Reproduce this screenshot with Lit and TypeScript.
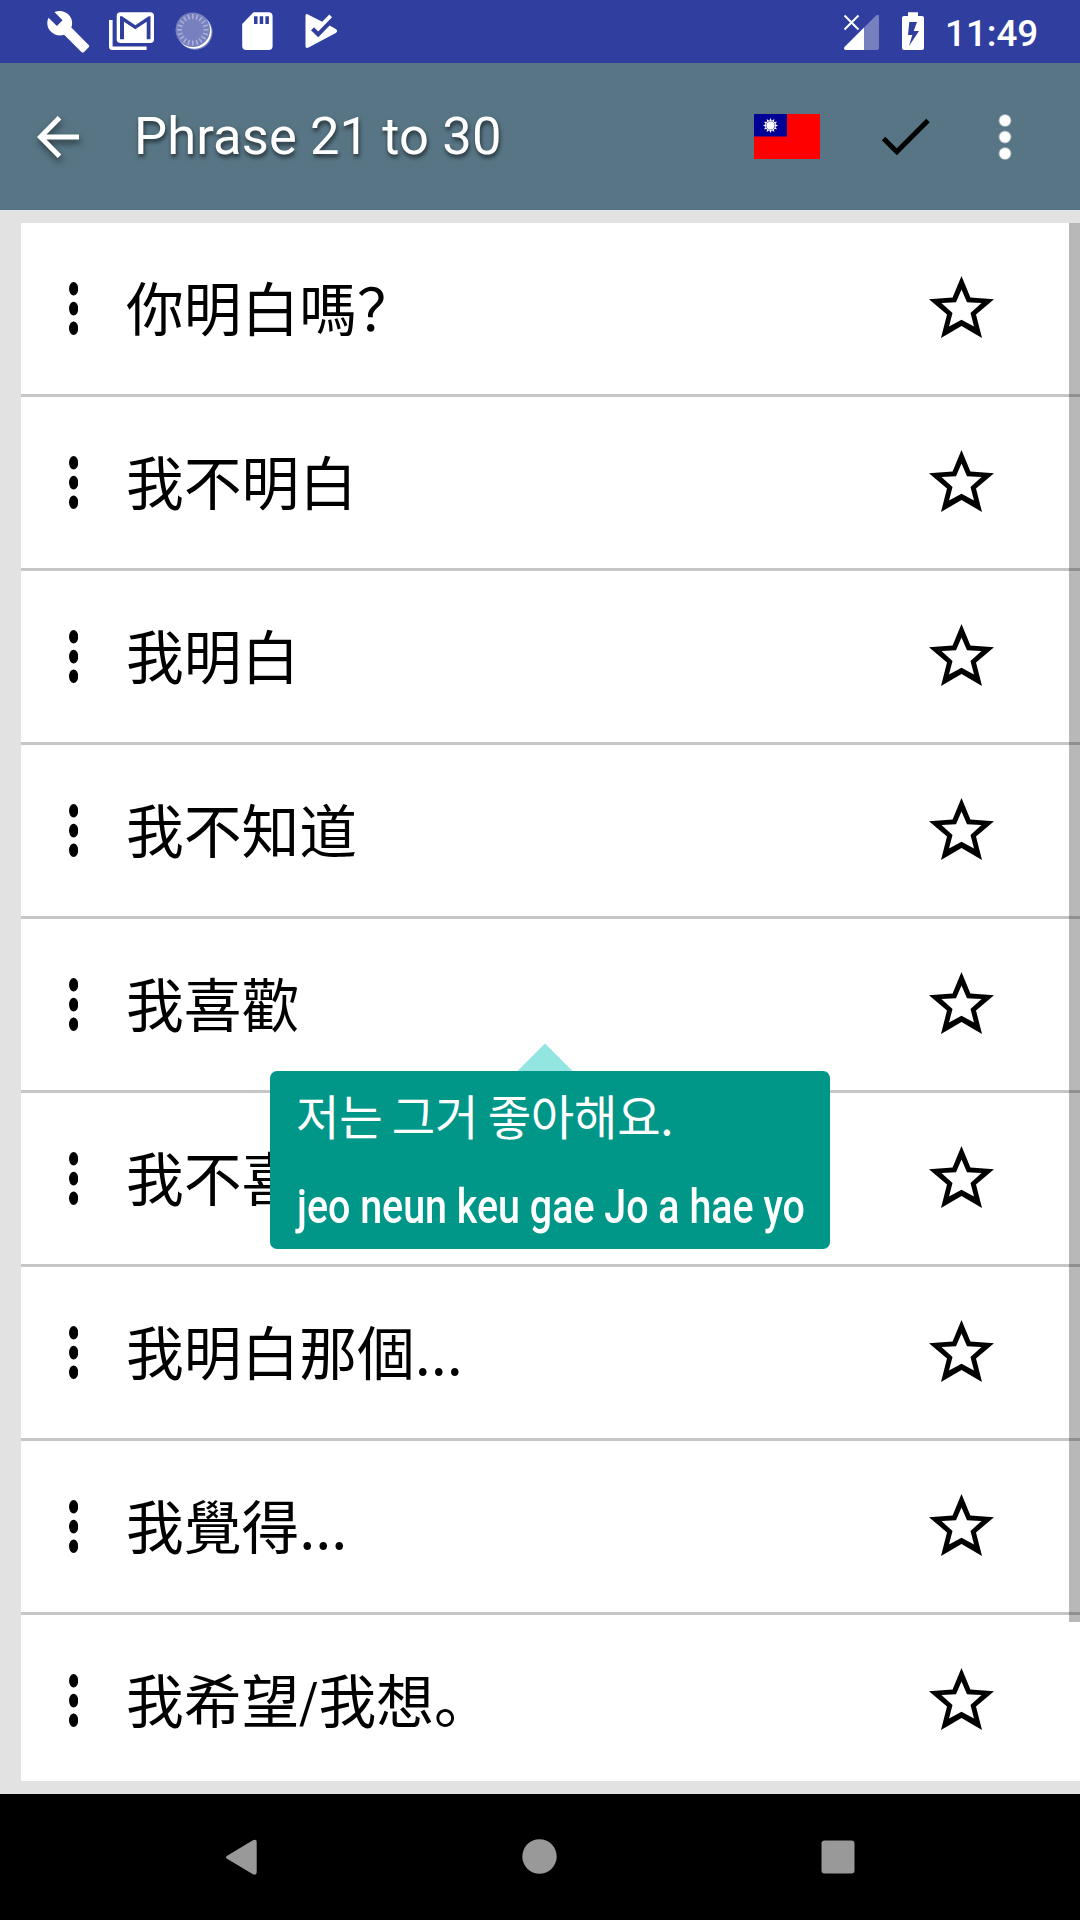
import { LitElement, html, css, svg } from "lit";
import { customElement, property } from "lit/decorators.js";

interface Phrase {
  text: string;
  rest?: string;
}

/* A phrase with a "rest" is drawn as two parts with a narrow slash between them. */
const PHRASES: Phrase[] = [
  { text: "你明白嗎？" },
  { text: "我不明白" },
  { text: "我明白" },
  { text: "我不知道" },
  { text: "我喜歡" },
  { text: "我不喜歡" },
  { text: "我明白那個..." },
  { text: "我覺得..." },
  { text: "我希望", rest: "我想。" },
];

@customElement("status-bar")
export class StatusBar extends LitElement {
  static styles = css`
    :host {
      display: flex;
      height: 63px;
      background: #303f9f;
      color: #fff;
      justify-content: space-between;
    }
    svg {
      display: block;
    }
    .right {
      display: flex;
    }
    .time {
      font: 500 36.75px/67px Roboto, sans-serif;
      width: 135px;
      white-space: nowrap;
    }
  `;

  render() {
    const ticks = Array.from({ length: 20 }, (_, i) => i * 18);
    return html`
      <svg width="360" height="63" viewBox="0 0 360 63" fill="#fff">
        <path
          transform="translate(45.500 8.800) scale(1.900)"
          d="M22.700 19l-9.100-9.100c.9-2.300.4-5-1.500-6.900-2-2-5-2.400-7.400-1.300L9 6 6 9 1.600 4.700C.4 7.100.9 10.100 2.900 12.100c1.900 1.900 4.600 2.400 6.900 1.500l9.100 9.100c.4.4 1 .4 1.400 0l2.300-2.300c.5-.4.5-1.100.1-1.400z"
        />
        <path d="M109 20h3.600v26.500h34v3.600h-34q-3.600 0-3.600-3.600z" />
        <path
          fill-rule="evenodd"
          d="M120.500 12.300H150.200Q154 12.300 154 16V39.200Q154 43 150.200 43H120.500Q116.700 43 116.700 39.200V16Q116.700 12.300 120.500 12.300ZM120 39.200H124V21.800L135.300 29.300 146.700 21.800V39.200H150.500V16.300H148.700L135.300 25.300 122 16.300H120Z"
        />
        <circle cx="195" cy="32.300" r="17.600" opacity=".3" />
        <circle cx="194.300" cy="31.500" r="17.300" />
        <circle cx="192.800" cy="29.800" r="17.300" fill="#7880bf" />
        ${ticks.map(
          (a) => svg`<path d="M192.800 14v5" stroke="#adb2d9" stroke-width="1.500" transform="rotate(${a} 192.800 29.800)"/>`
        )}
        <path
          fill-rule="evenodd"
          d="M253.500 12.300H268.500Q272.600 12.300 272.600 16.400V46Q272.600 50 268.500 50H246.300Q242.200 50 242.200 46V24ZM254 16.300V24H257.500V16.300ZM259.700 16.300V24H263.200V16.300ZM265.400 16.300V24H268.900V16.300Z"
        />
        <path
          d="M305.500 16Q305.500 13.200 308 14.500L322.200 21.800 329.300 14.500 332 17.200 318.200 31.500 314 27.200 311 30.200 318.200 37.300 329.600 25.600 335.800 29Q338.600 31 335.800 33L308.500 47.600Q305.500 49 305.500 46Z"
        />
      </svg>
      <div class="right">
        <svg width="127" height="63" viewBox="818 0 127 63" fill="#fff">
          <path d="M864 27.500 876 15.500Q879 13.500 879 17V48Q879 50 877 50H864Z" opacity=".34" />
          <path d="M864 27.500V50H846Q843 49.500 844.500 47Z" />
          <path d="M844.500 15.500 858.500 29.500M858.500 15.500 844.500 29.500" stroke="#fff" stroke-width="2" />
          <path
            fill-rule="evenodd"
            d="M908 12.300H918V16H922Q924 16 924 18V48Q924 50 922 50H904Q902 50 902 48V18Q902 16 904 16H908ZM909.300 22 908 35H912.300L909 46 919 31H913.700L917 22Z"
          />
        </svg>
        <div class="time">11:49</div>
      </div>
    `;
  }
}

@customElement("title-bar")
export class TitleBar extends LitElement {
  static styles = css`
    :host {
      display: flex;
      align-items: center;
      height: 147px;
      background: #577584;
      color: #fff;
    }
    svg {
      display: block;
      flex: none;
    }
    .back {
      filter: drop-shadow(1px 4px 3px rgba(0, 0, 0, 0.5));
      margin: 0 55px 0 37px;
    }
    .title {
      flex: 1;
      font: 400 52.5px/60px Roboto, sans-serif;
      letter-spacing: 0.1px;
      text-shadow: 1px 3px 4px rgba(0, 0, 0, 0.6);
      white-space: nowrap;
      margin-bottom: 1px;
    }
    .flag {
      margin-right: 62px;
    }
    .check {
      margin-right: 68px;
    }
    .more {
      margin-right: 68px;
    }
  `;

  render() {
    const rays = Array.from({ length: 12 }, (_, i) => i * 30);
    return html`
      <svg class="back" width="42" height="42" viewBox="0 0 42 42" fill="none" stroke="#fff" stroke-width="5">
        <path d="M42 21H5M22.500 1.700 3.500 21 22.500 40.300" />
      </svg>
      <div class="title">Phrase 21 to 30</div>
      <svg class="flag" width="66" height="45" viewBox="0 0 66 45">
        <path fill="red" d="M0 0h66v45H0z" />
        <path fill="#000095" d="M0 0h33v22.600H0z" />
        <circle cx="16.500" cy="11.500" r="4.200" fill="#fff" />
        ${rays.map(
          (a) => svg`<path d="M15.100 7 16.500 4 17.900 7z" fill="#fff" transform="rotate(${a} 16.500 11.500)"/>`
        )}
      </svg>
      <svg class="check" width="48" height="40" viewBox="0 0 48 40" fill="none" stroke="#000" stroke-width="5">
        <path d="M1.500 21.500 14.800 34.800 46 3.600" />
      </svg>
      <svg class="more" width="14" height="48" viewBox="0 0 14 48" fill="#fff">
        <circle cx="7" cy="7.500" r="6.500" opacity=".4" />
        <circle cx="7" cy="24" r="6.500" opacity=".4" />
        <circle cx="7" cy="40.500" r="6.500" opacity=".4" />
        <circle cx="7" cy="7.500" r="5.500" />
        <circle cx="7" cy="24" r="5.500" />
        <circle cx="7" cy="40.500" r="5.500" />
      </svg>
    `;
  }
}

@customElement("phrase-row")
export class PhraseRow extends LitElement {
  @property({ attribute: false }) phrase!: Phrase;

  static styles = css`
    :host {
      display: flex;
      align-items: center;
      box-sizing: border-box;
      flex: none;
      height: 174px;
      border-bottom: 3px solid #c6c6c6;
      color: #000;
    }
    svg {
      display: block;
      flex: none;
    }
    .handle {
      margin: 0 48px 0 47px;
    }
    .text {
      flex: 1;
      font: 400 57.75px/84px "Noto Sans CJK SC", sans-serif;
      white-space: nowrap;
      margin-bottom: 5px;
    }
    .slash {
      display: inline-block;
      width: 19.2px;
      font-family: Roboto, sans-serif;
      line-height: 1;
      transform: scaleX(0.82);
      transform-origin: left;
    }
    .star {
      margin: 0 86px 4px 0;
    }
  `;

  render() {
    const { text, rest } = this.phrase;
    return html`
      <svg class="handle" width="10" height="54" viewBox="-.6 .2 10 54">
        <ellipse cx="5" cy="7" rx="4.600" ry="6.800" />
        <ellipse cx="5" cy="26.800" rx="4.600" ry="6.800" />
        <ellipse cx="5" cy="46.500" rx="4.600" ry="6.800" />
      </svg>
      <div class="text">${text}${rest ? html`<span class="slash">/</span>${rest}` : ""}</div>
      <svg class="star" width="66" height="64" viewBox="-.5 0 66 64">
        <path
          fill-rule="evenodd"
          d="M33 1 41.900 22.500 65.500 24.200 47.500 39.400 53.500 63 33 50.900 12.500 63 18.500 39.400.500 24.200 24.100 22.500ZM33 14.500 27.500 27.300 13 28 24 38 20.500 51.500 33 44.700 45.500 51.500 42 38 53 28 38.500 27.300Z"
        />
      </svg>
    `;
  }
}

@customElement("app-root")
export class AppRoot extends LitElement {
  static styles = css`
    :host {
      display: flex;
      flex-direction: column;
      width: 1080px;
      height: 1920px;
      overflow: hidden;
      background: #e2e2e2;
    }
    status-bar,
    title-bar,
    .nav {
      flex: none;
    }
    .list {
      position: relative;
      flex: 1;
      min-height: 0;
      margin: 13px 0 13px 21px;
      background: #fff;
      overflow: hidden;
      display: flex;
      flex-direction: column;
    }
    .scroll {
      position: absolute;
      right: 0;
      top: 0;
      width: 11px;
      height: 1399px;
      background: rgba(0, 0, 0, 0.28);
    }
    .tip {
      position: absolute;
      left: 249px;
      top: 820px;
      width: 560px;
    }
    .arrow {
      display: block;
      margin-left: 247px;
    }
    .bubble {
      box-sizing: border-box;
      height: 178px;
      border-radius: 7px;
      background: #009688;
      color: #fff;
      padding: 10px 26px 0;
      white-space: nowrap;
    }
    .ko {
      font: 400 47.25px/68px "Noto Sans CJK KR", sans-serif;
      letter-spacing: -0.3px;
      word-spacing: -0.8px;
    }
    .roman {
      font: 500 47.25px/56px Roboto, sans-serif;
      margin: 30px 0 0 0.5px;
      width: 600px;
      transform: scaleX(0.834);
      transform-origin: left;
    }
    .nav {
      display: block;
      background: #000;
    }
  `;

  render() {
    return html`
      <status-bar></status-bar>
      <title-bar></title-bar>
      <div class="list">
        ${PHRASES.map((p) => html`<phrase-row .phrase=${p}></phrase-row>`)}
        <div class="scroll"></div>
        <div class="tip">
          <svg class="arrow" width="56" height="28" viewBox="0 0 56 28">
            <path fill="#93e5e2" d="M28 .500 55.500 28H.500z" />
          </svg>
          <div class="bubble">
            <div class="ko">저는 그거 좋아해요.</div>
            <div class="roman">jeo neun keu gae Jo a hae yo</div>
          </div>
        </div>
      </div>
      <svg class="nav" width="1080" height="126" viewBox="0 1794 1080 126" fill="#999">
        <path
          d="M227.500 1855.500 252.500 1840.500Q256.700 1838.500 256.700 1842V1872Q256.700 1876 252.500 1874L227.500 1859Q224.500 1857 227.500 1855.500Z"
        />
        <circle cx="539.500" cy="1856.500" r="17.200" />
        <rect x="821.500" y="1840.500" width="33" height="33" rx="3" />
      </svg>
    `;
  }
}
